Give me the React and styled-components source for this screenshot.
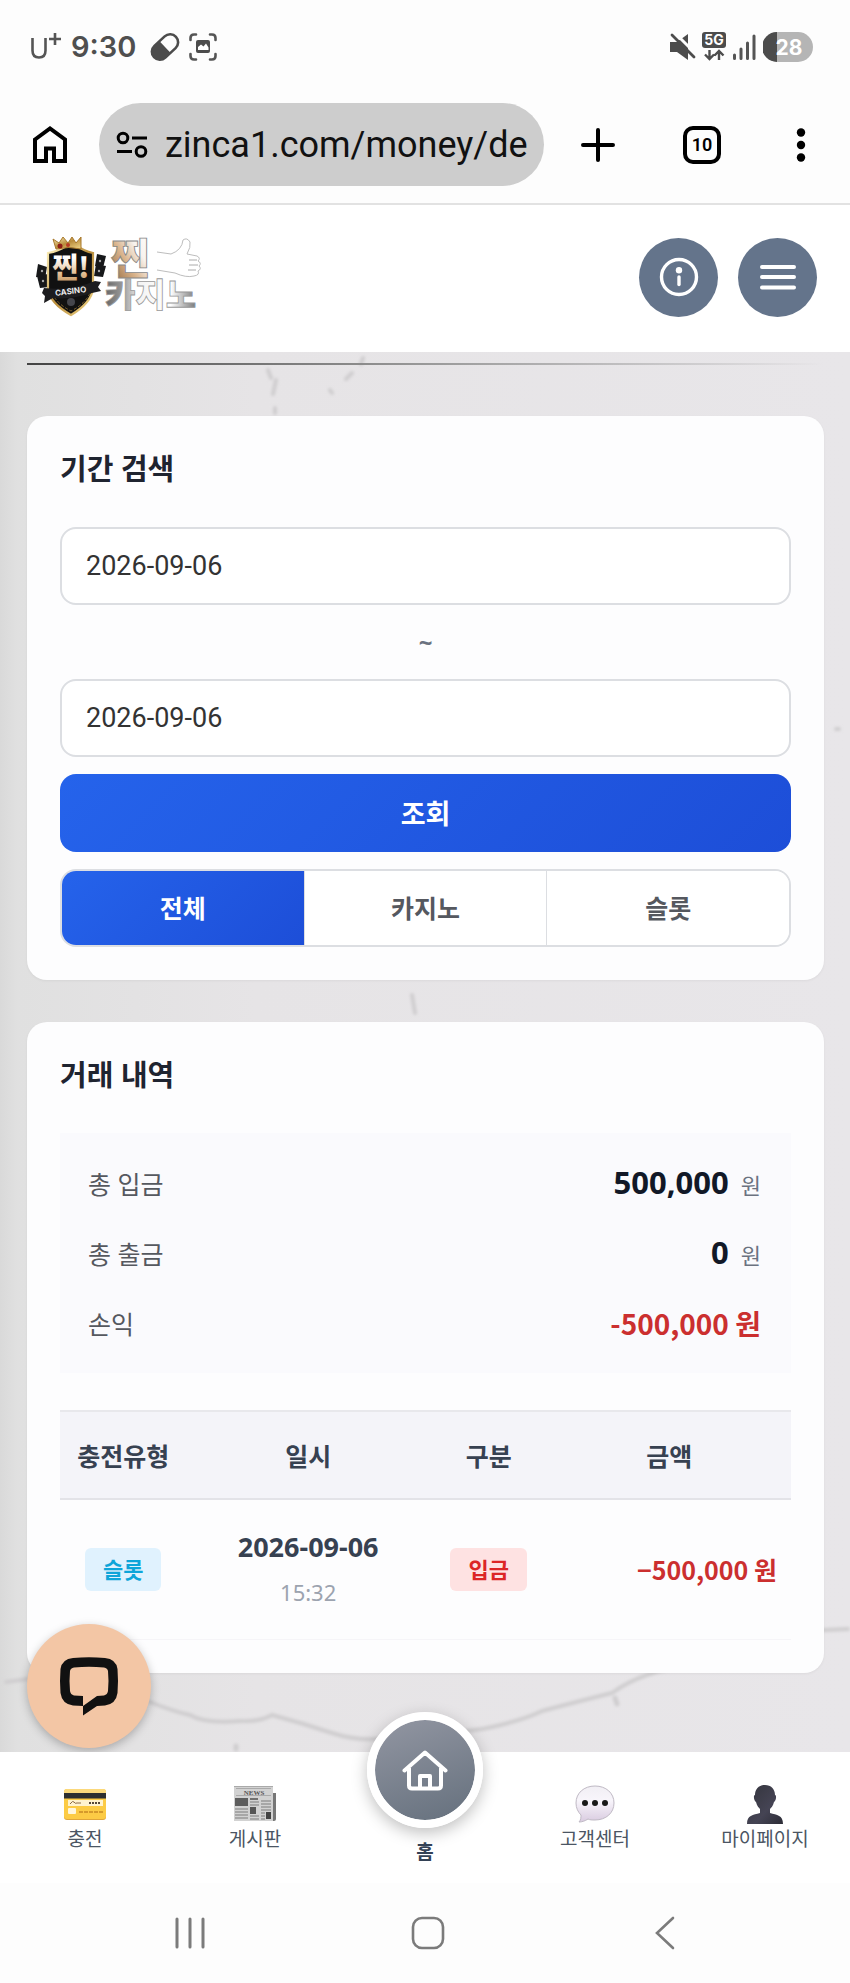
import React, { useState } from 'react'
import styled, { createGlobalStyle, css } from 'styled-components'

const tabs = ['전체', '카지노', '슬롯']

const rows = [
  { type: '슬롯', date: '2026-09-06', time: '15:32', kind: '입금', amount: '−500,000 원' },
]

function App() {
  const [tab, setTab] = useState('전체')
  const [from, setFrom] = useState('2026-09-06')
  const [to, setTo] = useState('2026-09-06')

  return (
    <Page>
      <GlobalStyle />
      <StatusBar />
      <BrowserBar />

      <Header>
        <LogoLink href='#' aria-label='찐카지노'>
          <Logo />
        </LogoLink>
        <HeaderButtons>
          <RoundButton aria-label='안내'>
            <svg width='42' height='42' viewBox='0 0 42 42' fill='none' stroke='#fff'>
              <circle cx='21' cy='21' r='17.5' strokeWidth='3.4' />
              <circle cx='21' cy='14.2' r='3.2' fill='#fff' stroke='none' />
              <path d='M21 21v7.5' strokeWidth='3.4' strokeLinecap='round' />
            </svg>
          </RoundButton>
          <RoundButton aria-label='메뉴'>
            <svg width='42' height='42' viewBox='0 0 42 42' stroke='#fff' strokeWidth='4' strokeLinecap='round'>
              <path d='M5 11h32M5 21h32M5 31.5h32' />
            </svg>
          </RoundButton>
        </HeaderButtons>
      </Header>

      <Main>
        <Marble />
        <TitleLine />
        <Card>
          <CardTitle>기간 검색</CardTitle>
          <DateInput aria-label='시작일' value={from} onChange={(e) => setFrom(e.target.value)} />
          <Tilde>~</Tilde>
          <DateInput aria-label='종료일' value={to} onChange={(e) => setTo(e.target.value)} />
          <SearchButton>조회</SearchButton>
          <Tabs>
            {tabs.map((name) => (
              <Tab key={name} $active={name === tab} onClick={() => setTab(name)}>
                {name}
              </Tab>
            ))}
          </Tabs>
        </Card>

        <Card>
          <CardTitle>거래 내역</CardTitle>
          <Summary>
            <SummaryRow>
              <dt>총 입금</dt>
              <dd>500,000 <Unit>원</Unit></dd>
            </SummaryRow>
            <SummaryRow>
              <dt>총 출금</dt>
              <dd>0 <Unit>원</Unit></dd>
            </SummaryRow>
            <SummaryRow $loss>
              <dt>손익</dt>
              <dd>-500,000 원</dd>
            </SummaryRow>
          </Summary>

          <Table>
            <colgroup>
              <col width='17.3%' />
              <col width='33.3%' />
              <col width='16.1%' />
              <col width='33.3%' />
            </colgroup>
            <thead>
              <tr>
                <th>충전유형</th>
                <th>일시</th>
                <th>구분</th>
                <th>금액</th>
              </tr>
            </thead>
            <tbody>
              {rows.map((row) => (
                <tr key={row.date + row.time}>
                  <td><Badge $color='#0ea5d9' $bg='#e0f2fe'>{row.type}</Badge></td>
                  <td>
                    <DateText>{row.date}</DateText>
                    <TimeText>{row.time}</TimeText>
                  </td>
                  <td><Badge $color='#dc2626' $bg='#fee2e2'>{row.kind}</Badge></td>
                  <AmountCell>{row.amount}</AmountCell>
                </tr>
              ))}
            </tbody>
          </Table>
        </Card>

        <ChatButton aria-label='채팅 상담'>
          <svg width='60' height='60' viewBox='0 0 60 60'>
            <path
              fill='#111'
              fillRule='evenodd'
              d='M14 2Q30 .5 46 2Q57 3 58.5 13Q59.5 25 58.5 37Q57 48 46 49.5L38 50L24 59.5V50L14 49.5Q3 48 1.5 37Q.5 25 1.5 13Q3 3 14 2ZM15 11.5Q30 10 45 11.5Q48.5 12 49 15Q50 25 49 35Q48.500 38.5 45 39.5L38 40L24 50V40L15 39.5Q11.5 38.5 11 35Q10 25 11 15Q11.5 12 15 11.5Z'
            />
          </svg>
        </ChatButton>
      </Main>

      <BottomNav>
        <NavItem href='#'><CardIcon />충전</NavItem>
        <NavItem href='#'><NewsIcon />게시판</NavItem>
        <HomeItem href='#'>
          <HomeCircle>
            <svg width='46' height='42' viewBox='0 0 46 42' fill='none' stroke='#fff' strokeWidth='4' strokeLinecap='round' strokeLinejoin='round'>
              <path d='M2.5 21.5L23 3.5l20.5 18M7 19v17.5q0 3 3 3h26q3 0 3-3V19M18 39V27h10v12' />
            </svg>
          </HomeCircle>
          홈
        </HomeItem>
        <NavItem href='#'><SpeechIcon />고객센터</NavItem>
        <NavItem href='#'><PersonIcon />마이페이지</NavItem>
      </BottomNav>

      <SystemNav>
        <PlainButton aria-label='최근 앱'>
          <svg width='34' height='34' viewBox='0 0 34 34' stroke='#7b7b7b' strokeWidth='3' strokeLinecap='round'>
            <path d='M4 3v28M17 3v28M30 3v28' />
          </svg>
        </PlainButton>
        <PlainButton aria-label='홈 화면'>
          <svg width='34' height='34' viewBox='0 0 34 34' fill='none' stroke='#7b7b7b' strokeWidth='2.6'>
            <rect x='2' y='2' width='30' height='30' rx='9' />
          </svg>
        </PlainButton>
        <PlainButton aria-label='뒤로'>
          <svg width='34' height='34' viewBox='0 0 34 34' fill='none' stroke='#7b7b7b' strokeWidth='2.6' strokeLinecap='round'>
            <path d='M25 2L9 17l16 15' />
          </svg>
        </PlainButton>
      </SystemNav>
    </Page>
  )
}

export default App

function StatusBar() {
  return (
    <Status>
      <StatusGroup>
        <svg width='33' height='30' viewBox='0 0 33 30' fill='none' stroke='#555' strokeWidth='2.6'>
          <path d='M2.5 6v12.5q0 7 6.5 7t6.5-7V6M19 7h12M25 1v12' />
        </svg>
        <Clock>9:30</Clock>
        <svg width='30' height='30' viewBox='0 0 30 30'>
          <g transform='rotate(-43 15 15)'>
            <rect x='0' y='7' width='30' height='16' rx='8' fill='none' stroke='#4c4c4c' strokeWidth='2.6' />
            <path fill='#4c4c4c' d='M15 7H8a8 8 0 0 0 0 16h7z' />
          </g>
        </svg>
        <svg width='30' height='30' viewBox='0 0 30 30' fill='none' stroke='#555' strokeWidth='2.6' strokeLinecap='round'>
          <path d='M2.5 8V6q0-3.5 3.5-3.5h2M22 2.5h2q3.5 0 3.5 3.5v2M27.5 22v2q0 3.5-3.5 3.5h-2M8 27.5H6q-3.5 0-3.5-3.5v-2' />
          <rect x='8' y='8' width='14' height='13' rx='2' fill='#4c4c4c' stroke='none' />
          <path fill='#fff' stroke='none' d='M10 18v-3l3-2.5 2.5 2 2.5-3 2.5 4v2.5z' />
        </svg>
      </StatusGroup>
      <StatusGroup $tight>
        <svg width='28' height='30' viewBox='0 0 28 30'>
          <path fill='#4c4c4c' d='M2 10h7L20 2v26L9 20H2z' />
          <path stroke='#fdfdfd' strokeWidth='3' d='M6 0l22 22' />
          <path stroke='#4c4c4c' strokeWidth='2.8' strokeLinecap='round' d='M4 3l22 22' />
        </svg>
        <svg width='26' height='30' viewBox='0 0 26 30'>
          <rect x='1' y='0' width='24' height='16' rx='3' fill='#4c4c4c' />
          <text x='13' y='13' textAnchor='middle' fill='#fff' fontFamily='Inter, sans-serif' fontSize='14' fontWeight='700'>5G</text>
          <path fill='none' stroke='#4c4c4c' strokeWidth='2.4' d='M8.5 18v9M4 22.5l4.5 4.5 4.5-4.5M18 28v-9M13.500 23.5l4.500-4.500 4.500 4.500' />
        </svg>
        <svg width='26' height='30' viewBox='0 0 26 30' stroke='#555' strokeWidth='3' strokeLinecap='round'>
          <path d='M2.5 23v3.5M9 17v9.5M15.5 11v15.5M22 4v22.5' />
        </svg>
        <svg width='50' height='30' viewBox='0 0 50 30'>
          <rect width='50' height='30' rx='15' fill='#b5b5b5' />
          <path fill='#4c4c4c' d='M14 0a15 15 0 0 0 0 30z' />
          <text x='26' y='23' textAnchor='middle' fill='#fff' fontFamily='Inter, sans-serif' fontSize='21' fontWeight='700'>28</text>
        </svg>
      </StatusGroup>
    </Status>
  )
}

function BrowserBar() {
  return (
    <Toolbar>
      <PlainButton aria-label='홈페이지'>
        <svg width='34' height='38' viewBox='0 0 34 38' fill='none' stroke='#000' strokeWidth='4'>
          <path d='M2 13.5L17 2.5l15 11V35H21V22.5h-8V35H2z' />
        </svg>
      </PlainButton>
      <Address>
        <svg width='32' height='28' viewBox='0 0 32 28' fill='none' stroke='#000' strokeWidth='3'>
          <circle cx='7' cy='7' r='4.8' />
          <circle cx='25' cy='20.5' r='4.8' />
          <path d='M16 7h15M1 20.5h15' />
        </svg>
        <UrlInput aria-label='주소' readOnly value='zinca1.com/money/de' />
      </Address>
      <ToolbarActions>
        <PlainButton aria-label='새 탭'>
          <svg width='38' height='38' viewBox='0 0 38 38' stroke='#000' strokeWidth='4' strokeLinecap='round'>
            <path d='M4 19h30M19 4v30' />
          </svg>
        </PlainButton>
        <TabCount aria-label='열린 탭 10개'>10</TabCount>
        <PlainButton aria-label='더보기'>
          <svg width='28' height='38' viewBox='0 0 28 38'>
            <circle cx='14' cy='6.5' r='4.2' />
            <circle cx='14' cy='19' r='4.2' />
            <circle cx='14' cy='31.5' r='4.2' />
          </svg>
        </PlainButton>
      </ToolbarActions>
    </Toolbar>
  )
}

function Logo() {
  return (
    <svg width='166' height='82' viewBox='0 0 166 82'>
      <defs>
        <linearGradient id='gold' x1='0' y1='0' x2='1' y2='1'>
          <stop offset='0' stopColor='#fff3bd' />
          <stop offset='.5' stopColor='#b98d3c' />
          <stop offset='1' stopColor='#f3d98c' />
        </linearGradient>
        <linearGradient id='cream' x1='0' y1='0' x2='0' y2='1'>
          <stop offset='.3' stopColor='#fff' />
          <stop offset='.7' stopColor='#e2bd91' />
          <stop offset='1' stopColor='#b88650' />
        </linearGradient>
        <linearGradient id='bronze' x1='0' y1='1' x2='1' y2='0'>
          <stop offset='.1' stopColor='#9c7148' />
          <stop offset='.4' stopColor='#d9b38b' />
          <stop offset='.65' stopColor='#f7f3ef' />
          <stop offset='1' stopColor='#fff' />
        </linearGradient>
        <linearGradient id='steel' x1='0' y1='0' x2='1' y2='0'>
          <stop offset='0' stopColor='#666' />
          <stop offset='.2' stopColor='#9b9b9b' />
          <stop offset='.38' stopColor='#f4f4f4' />
          <stop offset='.72' stopColor='#fff' />
          <stop offset='1' stopColor='#777' />
        </linearGradient>
      </defs>
      {/* playing cards at both sides of the shield */}
      <g fill='#17181a'>
        <path d='M3 28l9 3-2 12-9-2zM2 40l11-2 1 13-9 1zM62 18l9 2-3 12-8-2zM61 28l10 2-3 11-9-1z' />
      </g>
      <g fill='#aaa'>
        <circle cx='7' cy='35' r='1.2' />
        <circle cx='8' cy='45' r='1.2' />
        <circle cx='65' cy='25' r='1.2' />
        <circle cx='64' cy='35' r='1.2' />
      </g>
      <path fill='#111' stroke='url(#gold)' strokeWidth='2.2' d='M13 17q11-2 18-7h11q7 5 16 7v36q-2 14-22 26Q15 67 13 53z' />
      <path fill='none' stroke='#8a6b30' strokeWidth='1' strokeDasharray='3 2' d='M17 57q5 11 19 18 14-7 19-18' />
      <path fill='url(#gold)' stroke='#a8782c' strokeWidth='1' d='M21 13L18 3l6 4 4-6 5 6 4-6 4 6 5-6 0 12q-12-3-25 0z' />
      <circle cx='25' cy='10' r='2.5' fill='#8f1d16' />
      <circle cx='33' cy='9' r='2' fill='#b83a24' />
      <text x='36' y='42' textAnchor='middle' fill='url(#cream)' fontFamily='"Noto Sans CJK KR", sans-serif' fontSize='28' fontWeight='900'>찐!</text>
      <path fill='#1d1d1f' d='M9 52Q36 55 60 45l6 1-3 5 3 4-9 2Q36 64 18 62l-9 5 1-7-3-3z' />
      <text x='36' y='58' textAnchor='middle' transform='rotate(-7 36 58)' fill='#eee' fontFamily='Inter, sans-serif' fontSize='8' fontWeight='700'>CASINO</text>
      <circle cx='36' cy='66' r='4' fill='#45464c' />

      <text x='76' y='38' fill='url(#bronze)' stroke='#888' strokeWidth='.9' fontFamily='"Noto Sans CJK KR", sans-serif' fontSize='42' fontWeight='900'>찐</text>
      <path fill='#fff' stroke='#bdbdbd' strokeWidth='1' d='M122 16l14 2q11-4 12-14 4-3 7 2 1 5-3 12l10 2q4 2 1 5 4 2 1 5 3 3-1 5 2 4-4 5-8 2-19-3l-18-3' />
      <path fill='none' stroke='#aaa' strokeWidth='1' d='M154 24h8M154 29h9M153 34h8' />
      <text x='70' y='71' fill='url(#steel)' stroke='#999' strokeWidth='.8' fontFamily='"Noto Sans CJK KR", sans-serif' fontSize='33' fontWeight='900'>카지노</text>
    </svg>
  )
}

function Marble() {
  return (
    <MarbleSvg viewBox='0 0 850 1400' preserveAspectRatio='none' aria-hidden='true'>
      <defs>
        <filter id='soft'>
          <feGaussianBlur stdDeviation='1.8' />
        </filter>
      </defs>
      <g fill='none' stroke='#cfcdcf' strokeWidth='4' strokeLinecap='round' filter='url(#soft)'>
        <path d='M268 18l3 8M276 28l-3 14M275 56v5M363 6l-2 6M352 21l-6 6M330 38l2 3M412 643l3 18M836 377h3' />
        <path d='M6 1330l22-3M150 1350q25 10 40 13 15 9 50 6 20 1 32-6 30 8 60 18 30 10 60 4 50-2 90-8 40-8 60-18 30-8 70-18 30-22 80-28M802 1279l46-2' />
        <path d='M615 1346l2 6M236 1394v3' strokeWidth='5' />
      </g>
    </MarbleSvg>
  )
}

function CardIcon() {
  return (
    <svg width='46' height='40' viewBox='0 0 46 40'>
      <rect x='2' y='5' width='42' height='30' rx='3' fill='#e0a63b' />
      <rect x='2' y='4' width='42' height='30' rx='3' fill='#fccb45' />
      <path fill='#fbd97c' d='M5 4h36q3 0 3 3v2H2V7q0-3 3-3z' />
      <rect x='2' y='8' width='42' height='5.5' fill='#2d2f30' />
      <rect x='6' y='15' width='35' height='6' fill='#fff3cf' />
      <path d='M8 19q3-4 4-2t3 1l4 0' fill='none' stroke='#8a6a4a' />
      <path d='M27 18h11' stroke='#55483a' strokeWidth='2' strokeDasharray='2 1' />
      <rect x='6' y='23' width='8' height='6' rx='1' fill='#fff6dc' />
      <path d='M17 27h24' stroke='#d59a2c' strokeWidth='1.8' strokeDasharray='4 1' />
    </svg>
  )
}

function NewsIcon() {
  return (
    <svg width='46' height='40' viewBox='0 0 46 40'>
      <path fill='#777' d='M36 8h8v26q0 2-2 2h-6z' />
      <rect x='2' y='1' width='39' height='35' fill='#d2d2d2' />
      <path stroke='#aaa' d='M2 1.5h39M4 10.5h35M4 3.5h35' />
      <text x='22' y='9.5' textAnchor='middle' fill='#555' fontFamily='"Liberation Serif", serif' fontSize='7' fontWeight='700'>NEWS</text>
      <rect x='3' y='13' width='13' height='8' fill='#5d5d5d' />
      <path stroke='#666' strokeWidth='1.8' d='M18 14h8' />
      <path stroke='#999' strokeWidth='1.4' d='M18 17h9M18 20h9M29 16h10M29 19h10M29 22h10M29 25h10M3 24h13M3 27h13M3 30h13M3 33h13M18 31h9M18 34h9M29 28h4M29 31h4M29 34h4' />
      <rect x='18' y='22' width='6' height='7' fill='#555' />
      <rect x='34' y='27' width='5' height='7' fill='#444' />
    </svg>
  )
}

function SpeechIcon() {
  return (
    <svg width='46' height='40' viewBox='0 0 46 40'>
      <defs>
        <linearGradient id='bubble' x1='0' y1='0' x2='0' y2='1'>
          <stop offset='0' stopColor='#f1eff4' />
          <stop offset='.4' stopColor='#f8f5fb' />
          <stop offset='1' stopColor='#d9cbe0' />
        </linearGradient>
      </defs>
      <path fill='url(#bubble)' stroke='#bfb9c4' strokeWidth='1' d='M23 1c11 0 19 7 19 17s-8 17-19 17c-3 0-5 0-7-1-3 2-6 3-9 3 2-2 2-5 2-7-3-3-5-7-5-12C4 8 12 1 23 1z' />
      <g fill='#171717'>
        <circle cx='13' cy='18' r='3' />
        <circle cx='23' cy='18' r='3' />
        <circle cx='33' cy='18' r='3' />
      </g>
    </svg>
  )
}

function PersonIcon() {
  return (
    <svg width='46' height='40' viewBox='0 0 46 40'>
      <defs>
        <linearGradient id='person' x1='0' y1='0' x2='1' y2='1'>
          <stop offset='0' stopColor='#33343c' />
          <stop offset='.6' stopColor='#454454' />
          <stop offset='1' stopColor='#2c2c36' />
        </linearGradient>
      </defs>
      <path fill='url(#person)' d='M23 0c6 0 10 4 10 10 2 0 1 6-1 7-1 4-3 6-4 7v4c7 2 13 2 13 11H5c0-9 6-9 13-11v-4c-1-1-3-3-4-7-2-1-3-7-1-7C13 4 17 0 23 0z' />
    </svg>
  )
}

const GlobalStyle = createGlobalStyle`
  * {
    box-sizing: border-box;
  }
  body {
    margin: 0;
    background: #fdfdfd;
    font-family: "Noto Sans", "Noto Sans CJK KR", sans-serif;
  }
  button, input {
    font-family: inherit;
  }
  svg {
    display: block;
    flex-shrink: 0;
  }
`

const gradient = css`
  background: linear-gradient(135deg, #2563eb, #1d4ed8);
`

const Page = styled.div`
  min-height: 100vh;
  display: flex;
  flex-direction: column;
`

const Status = styled.div`
  display: flex;
  align-items: center;
  justify-content: space-between;
  height: 94px;
  padding: 0 37px 0 30px;
`

const StatusGroup = styled.div`
  display: flex;
  align-items: center;
  gap: ${(props) => (props.$tight ? '5px' : '8px')};
`

const Clock = styled.span`
  margin-right: 6px;
  color: #4f4f4f;
  font: 600 29px/40px Inter, sans-serif;
`

const Toolbar = styled.div`
  display: flex;
  align-items: center;
  padding: 9px 35px 17px 33px;
  border-bottom: 2px solid #e2e2e2;
`

const PlainButton = styled.button`
  padding: 0;
  border: none;
  background: none;
  cursor: pointer;
`

const Address = styled.div`
  flex: 1;
  min-width: 0;
  display: flex;
  align-items: center;
  gap: 17px;
  height: 83px;
  margin: 0 35px 0 32px;
  padding: 0 12px 0 17px;
  border-radius: 42px;
  background: #cdcdcd;
`

const UrlInput = styled.input`
  flex: 1;
  min-width: 0;
  padding: 0;
  border: none;
  outline: none;
  background: none;
  color: #111;
  font: 400 36px/50px Roboto, sans-serif;
`

const ToolbarActions = styled.div`
  display: flex;
  align-items: center;
  gap: 66px;
`

const TabCount = styled.button`
  width: 38px;
  height: 38px;
  padding: 0;
  border: 4px solid #000;
  border-radius: 10px;
  background: none;
  color: #000;
  font: 600 18px/28px Roboto, sans-serif;
`

const Header = styled.header`
  display: flex;
  align-items: center;
  justify-content: space-between;
  height: 147px;
  padding: 0 33px 3px 35px;
  background: #fff;
`

const LogoLink = styled.a`
  display: block;
`

const HeaderButtons = styled.div`
  display: flex;
  gap: 20px;
`

const RoundButton = styled.button`
  display: flex;
  align-items: center;
  justify-content: center;
  width: 79px;
  height: 79px;
  padding: 0;
  border: none;
  border-radius: 50%;
  background: #64748b;
  cursor: pointer;
`

const Main = styled.main`
  position: relative;
  flex: 1;
  padding: 11px 26px 78px 27px;
  background: linear-gradient(90deg, #d9d9d9, #e0e0e0 2%, #e6e4e6 30%, #e8e6e9);
`

const MarbleSvg = styled.svg`
  position: absolute;
  inset: 0;
  width: 100%;
  height: 100%;
`

const TitleLine = styled.div`
  position: relative;
  height: 2px;
  margin-bottom: 51px;
  background: linear-gradient(90deg, #444, #999 50%, transparent);
`

const Card = styled.section`
  position: relative;
  padding: 33px;
  border-radius: 20px;
  background: #fdfdfe;
  box-shadow: 0 1px 3px rgba(0, 0, 0, 0.05);

  & + & {
    margin-top: 42px;
  }
`

const CardTitle = styled.h2`
  margin: 0 0 38px;
  color: #1f2430;
  font-size: 29px;
  font-weight: 700;
  line-height: 40px;
`

const DateInput = styled.input`
  display: block;
  width: 100%;
  height: 78px;
  padding: 0 24px;
  border: 2px solid #dcdee2;
  border-radius: 16px;
  outline: none;
  background: #fff;
  color: #333;
  font: 400 27px/36px Roboto, sans-serif;
`

const Tilde = styled.div`
  color: #6b7280;
  font-size: 24px;
  font-weight: 700;
  line-height: 74px;
  text-align: center;
`

const SearchButton = styled.button`
  ${gradient}
  display: block;
  width: 100%;
  height: 78px;
  margin: 17px 0;
  padding: 0 0 2px;
  border: none;
  border-radius: 16px;
  color: #fff;
  font-size: 27px;
  font-weight: 700;
  cursor: pointer;
`

const Tabs = styled.div`
  display: flex;
  height: 78px;
  border: 2px solid #dcdee2;
  border-radius: 16px;
  overflow: hidden;
`

const Tab = styled.button`
  flex: 1;
  padding: 0 0 2px;
  border: none;
  background: #fff;
  color: #55585f;
  font-size: 25px;
  font-weight: 700;
  cursor: pointer;

  & + & {
    border-left: 1px solid #dcdee2;
  }

  ${(props) => props.$active && css`
    ${gradient}
    color: #fff;
  `}
`

const Summary = styled.dl`
  margin: 0 0 37px;
  padding: 15px 30px 15px 28px;
  background: #fafafd;
`

const SummaryRow = styled.div`
  display: flex;
  align-items: center;
  justify-content: space-between;
  height: 70px;

  dt {
    color: #55585f;
    font-size: 25px;
  }

  dd {
    margin: 0;
    color: #111827;
    font-size: 31px;
    font-weight: 700;
    line-height: 40px;

    ${(props) => props.$loss && css`
      color: #cb2f2f;
      font-family: "Noto Sans CJK KR", sans-serif;
      font-size: 28px;
    `}
  }
`

const Unit = styled.span`
  margin-left: 4px;
  color: #6b7280;
  font-size: 22px;
  font-weight: 400;
`

const Table = styled.table`
  width: 100%;
  border-collapse: collapse;
  table-layout: fixed;
  text-align: center;

  th {
    height: 88px;
    padding: 0;
    border-top: 2px solid #e8e8ec;
    border-bottom: 2px solid #e3e3e8;
    background: #f4f4f9;
    color: #374151;
    font-size: 25px;
    font-weight: 700;
  }

  td {
    height: 140px;
    padding: 0;
    border-bottom: 1px solid #f6f5f8;
  }
`

const Badge = styled.span`
  display: inline-block;
  padding: 0 18px;
  border-radius: 6px;
  background: ${(props) => props.$bg};
  color: ${(props) => props.$color};
  font-size: 22px;
  font-weight: 700;
  line-height: 43px;
`

const DateText = styled.div`
  color: #374151;
  font-size: 27px;
  font-weight: 700;
  line-height: 46px;
`

const TimeText = styled.div`
  color: #9ca3af;
  font-size: 22px;
  line-height: 44px;
`

const AmountCell = styled.td`
  && {
    padding-right: 14px;
    color: #cb2f2f;
    font-family: "Noto Sans CJK KR", sans-serif;
    font-size: 25px;
    font-weight: 700;
    text-align: right;
  }
`

const ChatButton = styled.button`
  position: absolute;
  left: 27px;
  bottom: 4px;
  display: flex;
  align-items: center;
  justify-content: center;
  width: 124px;
  height: 124px;
  padding: 0;
  border: none;
  border-radius: 50%;
  background: #f3c6a5;
  box-shadow: 0 3px 10px rgba(0, 0, 0, 0.25);
  cursor: pointer;
`

const BottomNav = styled.nav`
  position: relative;
  display: grid;
  grid-template-columns: repeat(5, 1fr);
  align-items: start;
  height: 131px;
  background: #fff;
`

const NavItem = styled.a`
  display: flex;
  flex-direction: column;
  align-items: center;
  padding-top: 33px;
  color: #4b5563;
  font-size: 19px;
  line-height: 28px;
  text-decoration: none;
`

const HomeItem = styled(NavItem)`
  margin-top: -40px;
  padding-top: 0;
  color: #334155;
  font-weight: 700;
`

const HomeCircle = styled.span`
  display: flex;
  align-items: center;
  justify-content: center;
  width: 116px;
  height: 116px;
  margin-bottom: 10px;
  border: 8px solid #fff;
  border-radius: 50%;
  background: linear-gradient(160deg, #9296a2, #65707d);
  background-clip: padding-box;
  box-shadow: 0 5px 16px rgba(0, 0, 0, 0.25);
`

const SystemNav = styled.div`
  display: flex;
  align-items: center;
  justify-content: space-between;
  height: 100px;
  padding: 0 168px 0 173px;
`
